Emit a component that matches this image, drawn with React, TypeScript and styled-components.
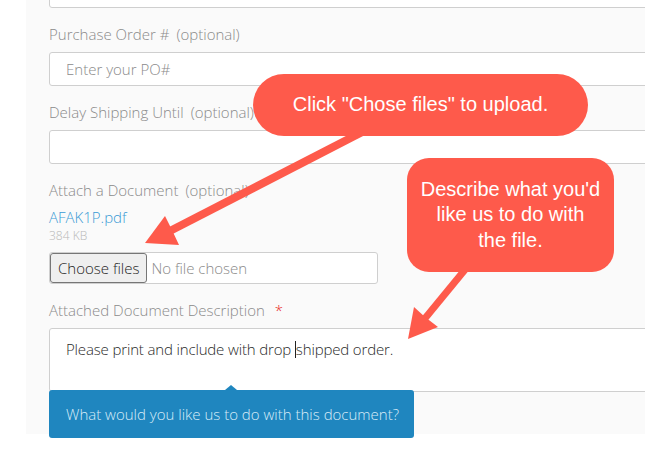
import React from "react"
import styled, { createGlobalStyle } from "styled-components"

const GlobalStyle = createGlobalStyle`
  html, body {
    margin: 0;
    padding: 0;
    background: #fff;
    overflow: hidden;
  }
  body {
    font-family: "Open Sans", "Liberation Sans", sans-serif;
  }
`

const Page = styled.div`
  position: relative;
  width: 645px;
  height: 451px;
  overflow: hidden;
`

const Panel = styled.div`
  margin-left: 26px;
  margin-top: -26px;
  width: 700px;
  background: #fafafa;
  padding: 0 0 42px 23px;
  box-sizing: border-box;
`

const Field = styled.div`
  position: relative;
  margin-top: 16px;
  &:first-child {
    margin-top: 0;
  }
`

const Label = styled.div`
  font-size: 15px;
  font-weight: 300;
  line-height: 20px;
  color: #8a8a8a;
  margin-bottom: 8px;
  white-space: nowrap;
`

const Optional = styled.span`
  margin-left: 7px;
`

const Required = styled.span`
  color: #e8261c;
  margin-left: 10px;
`

const TextInput = styled.div<{ $height?: number }>`
  box-sizing: border-box;
  width: 640px;
  height: ${(p) => p.$height ?? 34}px;
  border: 1px solid #cfcfcf;
  border-radius: 3px;
  background: #fff;
  padding: 0 16px;
  display: flex;
  align-items: center;
  font-size: 15px;
  font-weight: 300;
  color: #8a8a8a;
`

const FileLink = styled.div`
  font-size: 15px;
  font-weight: 300;
  line-height: 18px;
  color: #3a9bd5;
  margin-top: 3px;
`

const FileSize = styled.div`
  font-size: 12px;
  font-weight: 300;
  line-height: 16px;
  color: #b8b8b8;
  margin-top: 2px;
  margin-bottom: 8px;
`

const FileBox = styled.div`
  box-sizing: border-box;
  width: 329px;
  height: 32px;
  border: 1px solid #cfcfcf;
  border-radius: 3px;
  background: #fff;
  display: flex;
  align-items: center;
  font-size: 15px;
  font-weight: 300;
`

const FileButton = styled.span`
  box-sizing: border-box;
  height: 30px;
  display: flex;
  align-items: center;
  padding: 0 7px;
  background: #efefef;
  border: 1px solid #767676;
  border-radius: 3px;
  color: #222;
`

const NoFile = styled.span`
  margin-left: 4px;
  color: #8a8a8a;
`

const TextArea = styled.div`
  box-sizing: border-box;
  width: 640px;
  height: 64px;
  border: 1px solid #cfcfcf;
  border-radius: 3px;
  background: #fff;
  padding: 9px 16px;
  font-size: 15px;
  font-weight: 300;
  letter-spacing: -0.15px;
  color: #2a2a2a;
  line-height: 22px;
`

const Caret = styled.span`
  display: inline-block;
  width: 1px;
  height: 17px;
  background: #222;
  vertical-align: -3px;
`

const Tooltip = styled.div`
  position: absolute;
  left: 0;
  top: calc(100% - 2px);
  box-sizing: border-box;
  width: 365px;
  height: 48px;
  background: #1f86bf;
  border-radius: 3px;
  color: #d8ecf8;
  font-size: 15px;
  font-weight: 300;
  display: flex;
  align-items: center;
  padding-left: 17px;
  z-index: 2;
  &::before {
    content: "";
    position: absolute;
    left: 176px;
    top: -5px;
    border-left: 6px solid transparent;
    border-right: 6px solid transparent;
    border-bottom: 5px solid #1f86bf;
  }
`

const Callout = styled.div<{ $pill?: boolean }>`
  position: absolute;
  background: #fe5a4b;
  color: #fff;
  font-family: "Liberation Sans", Arial, sans-serif;
  font-size: 20px;
  line-height: 25.5px;
  text-align: center;
  display: flex;
  align-items: center;
  justify-content: center;
  box-sizing: border-box;
  border-radius: ${(p) => (p.$pill ? "31px" : "22px")};
  z-index: 4;
`

const Arrows = styled.svg`
  position: absolute;
  left: 0;
  top: 0;
  z-index: 3;
  pointer-events: none;
`

export default function App() {
  return (
    <Page>
      <GlobalStyle />
      <Panel>
        <Field>
          <TextInput />
        </Field>
        <Field>
          <Label>
            Purchase Order #<Optional>(optional)</Optional>
          </Label>
          <TextInput>Enter your PO#</TextInput>
        </Field>
        <Field>
          <Label>
            Delay Shipping Until<Optional>(optional)</Optional>
          </Label>
          <TextInput />
        </Field>
        <Field>
          <Label>
            Attach a Document<Optional>(optional)</Optional>
          </Label>
          <FileLink>AFAK1P.pdf</FileLink>
          <FileSize>384 KB</FileSize>
          <FileBox>
            <FileButton>Choose files</FileButton>
            <NoFile>No file chosen</NoFile>
          </FileBox>
        </Field>
        <Field>
          <Label>
            Attached Document Description<Required>*</Required>
          </Label>
          <TextArea>
            Please print and include with drop <Caret />shipped order.
          </TextArea>
          <Tooltip>What would you like us to do with this document?</Tooltip>
        </Field>
      </Panel>

      <Arrows width="645" height="451" viewBox="0 0 645 451">
        <line x1="370" y1="128" x2="168" y2="232" stroke="#fe5a4b" strokeWidth="8" />
        <polygon points="145,243 165,216 172,230 179,245" fill="#fe5a4b" />
        <line x1="468" y1="266" x2="422" y2="322" stroke="#fe5a4b" strokeWidth="7" />
        <polygon points="408,339 414,307 425,317 438,327" fill="#fe5a4b" />
      </Arrows>

      <Callout $pill style={{ left: 253, top: 74, width: 335, height: 62 }}>
        Click "Chose files" to upload.
      </Callout>
      <Callout style={{ left: 407, top: 158, width: 207, height: 114 }}>
        Describe what you'd
        <br />
        like us to do with
        <br />
        the file.
      </Callout>
    </Page>
  )
}
